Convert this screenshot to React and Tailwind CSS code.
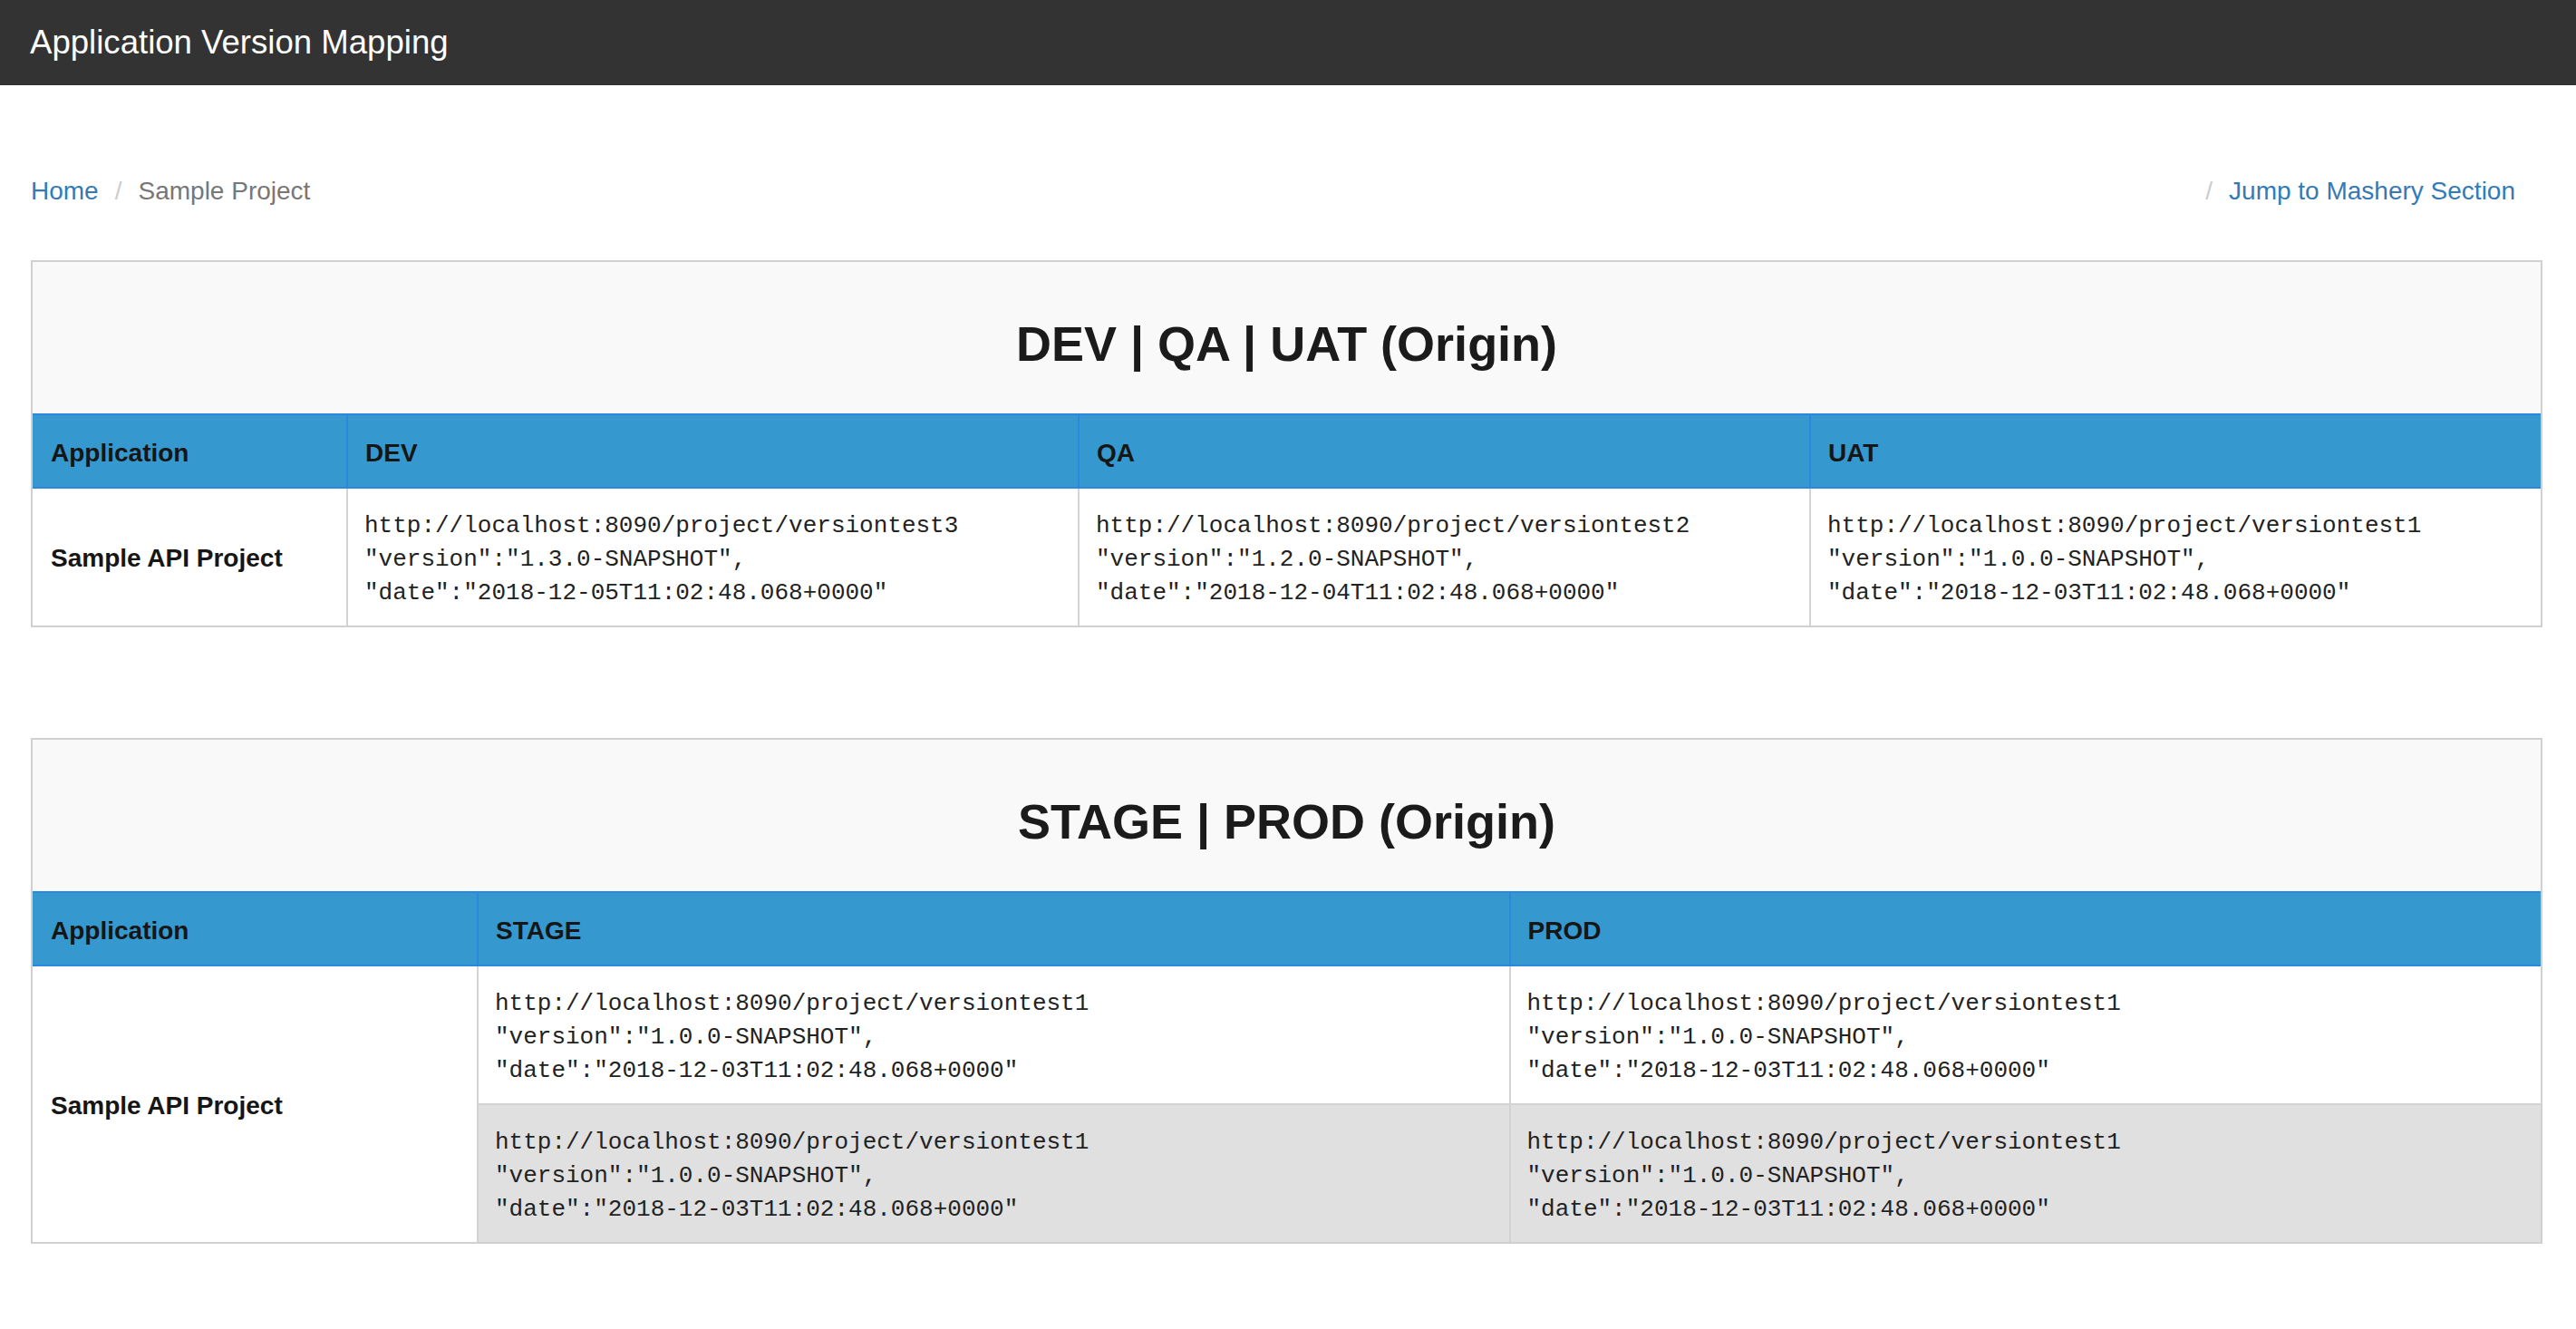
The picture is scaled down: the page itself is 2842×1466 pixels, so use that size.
import React from 'react';

const sans = "font-['Liberation_Sans',Arial,sans-serif]";

const originRows = [
  { url: 'http://localhost:8090/project/versiontest3', version: '1.3.0-SNAPSHOT', date: '2018-12-05T11:02:48.068+0000' },
  { url: 'http://localhost:8090/project/versiontest2', version: '1.2.0-SNAPSHOT', date: '2018-12-04T11:02:48.068+0000' },
  { url: 'http://localhost:8090/project/versiontest1', version: '1.0.0-SNAPSHOT', date: '2018-12-03T11:02:48.068+0000' },
];

const stageInfo = { url: 'http://localhost:8090/project/versiontest1', version: '1.0.0-SNAPSHOT', date: '2018-12-03T11:02:48.068+0000' };

function VersionCell({ info, shaded }) {
  return (
    <div
      className={`border-l-2 border-[#d3d3d3] px-[18px] pt-[23px] pb-[17px] font-['Liberation_Mono',monospace] text-[26px] leading-[37px] text-[#222] ${
        shaded ? 'bg-[#e0e0e0] border-t-2' : 'bg-white'
      }`}
    >
      <div>{info.url}</div>
      <div>{`"version":"${info.version}",`}</div>
      <div>{`"date":"${info.date}"`}</div>
    </div>
  );
}

function HeadCell({ children, first }) {
  return (
    <div
      className={`px-[19px] pt-[22px] pb-[17px] text-[28px] leading-[40px] font-bold text-[#161616] ${
        first ? 'pl-[20px]' : 'border-l-2 border-[#2c88de]'
      }`}
    >
      {children}
    </div>
  );
}

function PanelTitle({ children }) {
  return (
    <div className="bg-[#f9f9f9] pt-[63px] pb-[50px] text-center">
      <h2 className="text-[54px] leading-[54px] font-bold text-[#1b1b1b]">{children}</h2>
    </div>
  );
}

export default function App() {
  return (
    <div className={`min-h-[1466px] bg-white ${sans}`}>
      <div className="h-[94px] bg-[#333333] flex items-center px-[33px]">
        <span className="text-white text-[36.6px]">Application Version Mapping</span>
      </div>

      <div className="ml-[34px] w-[2771px] mt-[97px] flex justify-between text-[28px] leading-[40px]">
        <div className="flex">
          <a className="text-[#337ab7]" href="#">Home</a>
          <span className="mx-[18px] text-[#cccccc]">/</span>
          <span className="text-[#777777]">Sample Project</span>
        </div>
        <div className="flex pr-[30px]">
          <span className="mr-[18px] text-[#cccccc]">/</span>
          <a className="text-[#337ab7]" href="#">Jump to Mashery Section</a>
        </div>
      </div>

      {/* dev / qa / uat */}
      <div className="ml-[34px] w-[2771px] mt-[56px] border-2 border-[#d0d0d0]">
        <PanelTitle>DEV | QA | UAT (Origin)</PanelTitle>
        <div className="grid grid-cols-[346px_1fr_1fr_1fr] bg-[#3598cf] border-y-2 border-[#2c88de]">
          <HeadCell first>Application</HeadCell>
          <HeadCell>DEV</HeadCell>
          <HeadCell>QA</HeadCell>
          <HeadCell>UAT</HeadCell>
        </div>
        <div className="grid grid-cols-[346px_1fr_1fr_1fr]">
          <div className="flex items-center px-[20px] pt-[3px] text-[28px] font-bold text-[#161616]">Sample API Project</div>
          {originRows.map((r, i) => (
            <VersionCell key={i} info={r} />
          ))}
        </div>
      </div>

      {/* stage / prod */}
      <div className="ml-[34px] w-[2771px] mt-[122px] border-2 border-[#d0d0d0]">
        <PanelTitle>STAGE | PROD (Origin)</PanelTitle>
        <div className="grid grid-cols-[490px_1fr_1fr] bg-[#3598cf] border-y-2 border-[#2c88de]">
          <HeadCell first>Application</HeadCell>
          <HeadCell>STAGE</HeadCell>
          <HeadCell>PROD</HeadCell>
        </div>
        <div className="grid grid-cols-[490px_1fr_1fr]">
          <div className="row-span-2 flex items-center px-[20px] pt-[3px] text-[28px] font-bold text-[#161616]">Sample API Project</div>
          <VersionCell info={stageInfo} />
          <VersionCell info={stageInfo} />
          <VersionCell info={stageInfo} shaded />
          <VersionCell info={stageInfo} shaded />
        </div>
      </div>
    </div>
  );
}
